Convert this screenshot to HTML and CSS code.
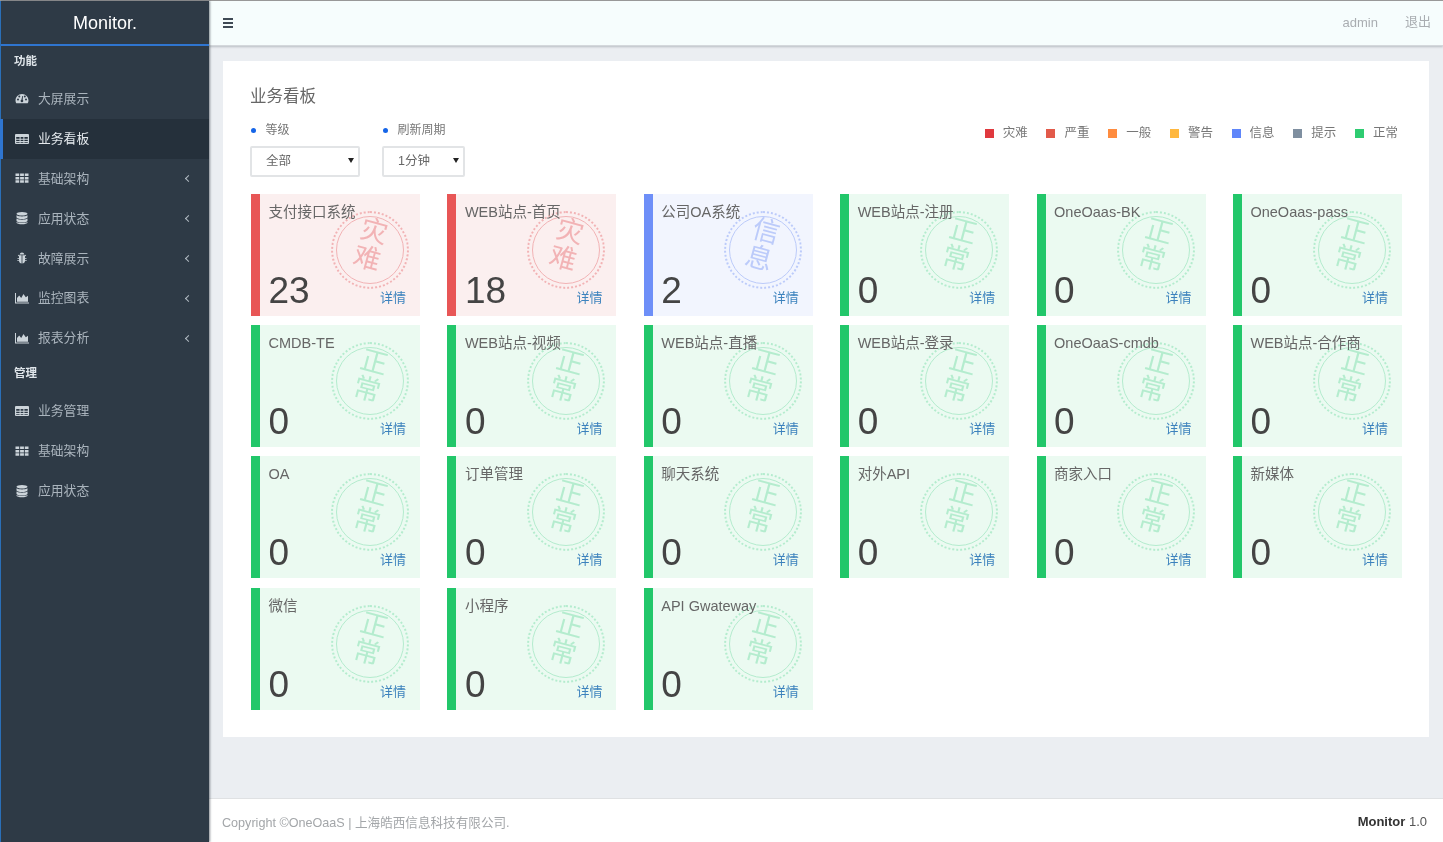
FILE: index.html
```html
<!DOCTYPE html>
<html lang="zh-CN">
<head>
<meta charset="utf-8">
<title>Monitor</title>
<link rel="stylesheet" href="styles.css">
</head>
<body>
<svg class="defs" width="0" height="0" aria-hidden="true">
  <symbol id="i-gauge" viewBox="0 0 14 14"><path fill="currentColor" fill-rule="evenodd" d="M7 2C3.2 2 .5 5 .5 8.500c0 1.100.3 2 .8 2.800h11.400c.5-.8.800-1.700.8-2.800C13.500 5 10.800 2 7 2zM3 8.500a1 1 0 1 1 0-2 1 1 0 0 1 0 2zm1.300-3a1 1 0 1 1 0-2 1 1 0 0 1 0 2zM7 10.200a1.300 1.300 0 0 1-.6-2.500L7.300 4l.7.100-.3 3.700A1.300 1.300 0 0 1 7 10.200zm2.800-4.700a1 1 0 1 1 0-2 1 1 0 0 1 0 2zM11 8.500a1 1 0 1 1 0-2 1 1 0 0 1 0 2z"/></symbol>
  <symbol id="i-table" viewBox="0 0 14 14"><path fill="currentColor" fill-rule="evenodd" d="M1 2h12a1 1 0 0 1 1 1v8a1 1 0 0 1-1 1H1a1 1 0 0 1-1-1V3a1 1 0 0 1 1-1zm.2 3v1.800h3.400V5zm4.400 0v1.800h2.800V5zm3.800 0v1.800h3.400V5zM1.200 7.800v1.200h3.400V7.800zm4.400 0v1.200h2.800V7.800zm3.800 0v1.200h3.400V7.800zM1.200 10v.8h3.400V10zm4.400 0v.8h2.800V10zm3.800 0v.8h3.400V10z"/></symbol>
  <symbol id="i-grid" viewBox="0 0 14 14"><path fill="currentColor" d="M.5 2.500h3.700v2.600H.5zM5.100 2.500h3.800v2.600H5.100zM9.800 2.500h3.700v2.600H9.800zM.5 5.900h3.700v2.500H.5zM5.100 5.900h3.800v2.500H5.100zM9.800 5.900h3.700v2.500H9.800zM.5 9.200h3.700v2.500H.5zM5.100 9.200h3.800v2.500H5.100zM9.800 9.200h3.700v2.500H9.800z"/></symbol>
  <symbol id="i-db" viewBox="0 0 14 14"><path fill="currentColor" d="M7 1c2.800 0 5.500.8 5.500 1.800S9.800 4.600 7 4.600 1.500 3.800 1.500 2.800 4.200 1 7 1zM1.500 4.200c1 .8 3.500 1.200 5.500 1.200s4.500-.4 5.500-1.200v2c0 1-2.700 1.800-5.500 1.800S1.500 7.200 1.500 6.200zM1.500 7.600c1 .8 3.500 1.200 5.500 1.200s4.500-.4 5.500-1.200v2.100c0 1-2.700 1.800-5.500 1.800s-5.500-.8-5.500-1.800zM1.500 11c1 .8 3.500 1.100 5.500 1.100s4.500-.3 5.500-1.100v.7c0 .8-2.700 1.500-5.500 1.500s-5.500-.7-5.500-1.500z"/></symbol>
  <symbol id="i-bug" viewBox="0 0 14 14"><path fill="currentColor" d="M7 1.500a2.500 2.500 0 0 1 2.400 2H4.600a2.500 2.500 0 0 1 2.400-2zM4.200 4.300h2.400v8.200c-1.500-.2-2.400-1.200-2.600-2.500H2.300V9.200H4V7.700H2.500V6.900H4V5.500L2.800 4.200l.5-.5zM7.400 4.300h2.400l.9-.6.500.5L10 5.500v1.400h1.500v.8H10v1.500h1.700v.8H10c-.2 1.300-1.100 2.300-2.600 2.500z"/></symbol>
  <symbol id="i-chart" viewBox="0 0 14 14"><path fill="currentColor" d="M0 2h1v9.500h13v1H0zM2 10.800V7l2.200-2.500L6.200 7l2.300-4 2.300 3.300L13 4.800v6z"/></symbol>
</svg>
<div class="app">
  <aside class="sidebar">
    <div class="brand">Monitor.</div>
    <div class="nav-title">功能</div>
    <a class="nav-item"><svg class="nav-icon"><use href="#i-gauge"/></svg><span>大屏展示</span></a>
    <a class="nav-item active"><svg class="nav-icon"><use href="#i-table"/></svg><span>业务看板</span></a>
    <a class="nav-item"><svg class="nav-icon"><use href="#i-grid"/></svg><span>基础架构</span><i class="chev"></i></a>
    <a class="nav-item"><svg class="nav-icon"><use href="#i-db"/></svg><span>应用状态</span><i class="chev"></i></a>
    <a class="nav-item"><svg class="nav-icon"><use href="#i-bug"/></svg><span>故障展示</span><i class="chev"></i></a>
    <a class="nav-item"><svg class="nav-icon"><use href="#i-chart"/></svg><span>监控图表</span><i class="chev"></i></a>
    <a class="nav-item"><svg class="nav-icon"><use href="#i-chart"/></svg><span>报表分析</span><i class="chev"></i></a>
    <div class="nav-title">管理</div>
    <a class="nav-item"><svg class="nav-icon"><use href="#i-table"/></svg><span>业务管理</span></a>
    <a class="nav-item"><svg class="nav-icon"><use href="#i-grid"/></svg><span>基础架构</span></a>
    <a class="nav-item"><svg class="nav-icon"><use href="#i-db"/></svg><span>应用状态</span></a>
  </aside>
  <div class="main">
    <header class="topbar">
      <div class="burger"><b></b><b></b><b></b></div>
      <div class="top-links"><span class="admin">admin</span><span class="logout">退出</span></div>
    </header>
    <div class="content">
      <section class="panel">
        <h2 class="panel-title">业务看板</h2>
        <div class="filters">
          <div class="filter">
            <div class="filter-label">等级</div>
            <div class="select select-level"><span>全部</span></div>
          </div>
          <div class="filter">
            <div class="filter-label">刷新周期</div>
            <div class="select select-cycle"><span>1分钟</span></div>
          </div>
          <ul class="legend">
            <li><i class="sw c1"></i>灾难</li>
            <li><i class="sw c2"></i>严重</li>
            <li><i class="sw c3"></i>一般</li>
            <li><i class="sw c4"></i>警告</li>
            <li><i class="sw c5"></i>信息</li>
            <li><i class="sw c6"></i>提示</li>
            <li><i class="sw c7"></i>正常</li>
          </ul>
        </div>
        <div class="cards">
          <article class="card bad"><div class="stamp"><span>灾<br>难</span></div><h3>支付接口系统</h3><div class="foot"><strong>23</strong><a>详情</a></div></article>
          <article class="card bad"><div class="stamp"><span>灾<br>难</span></div><h3>WEB站点-首页</h3><div class="foot"><strong>18</strong><a>详情</a></div></article>
          <article class="card info"><div class="stamp"><span>信<br>息</span></div><h3>公司OA系统</h3><div class="foot"><strong>2</strong><a>详情</a></div></article>
          <article class="card ok"><div class="stamp"><span>正<br>常</span></div><h3>WEB站点-注册</h3><div class="foot"><strong>0</strong><a>详情</a></div></article>
          <article class="card ok"><div class="stamp"><span>正<br>常</span></div><h3>OneOaas-BK</h3><div class="foot"><strong>0</strong><a>详情</a></div></article>
          <article class="card ok"><div class="stamp"><span>正<br>常</span></div><h3>OneOaas-pass</h3><div class="foot"><strong>0</strong><a>详情</a></div></article>
          <article class="card ok"><div class="stamp"><span>正<br>常</span></div><h3>CMDB-TE</h3><div class="foot"><strong>0</strong><a>详情</a></div></article>
          <article class="card ok"><div class="stamp"><span>正<br>常</span></div><h3>WEB站点-视频</h3><div class="foot"><strong>0</strong><a>详情</a></div></article>
          <article class="card ok"><div class="stamp"><span>正<br>常</span></div><h3>WEB站点-直播</h3><div class="foot"><strong>0</strong><a>详情</a></div></article>
          <article class="card ok"><div class="stamp"><span>正<br>常</span></div><h3>WEB站点-登录</h3><div class="foot"><strong>0</strong><a>详情</a></div></article>
          <article class="card ok"><div class="stamp"><span>正<br>常</span></div><h3>OneOaaS-cmdb</h3><div class="foot"><strong>0</strong><a>详情</a></div></article>
          <article class="card ok"><div class="stamp"><span>正<br>常</span></div><h3>WEB站点-合作商</h3><div class="foot"><strong>0</strong><a>详情</a></div></article>
          <article class="card ok"><div class="stamp"><span>正<br>常</span></div><h3>OA</h3><div class="foot"><strong>0</strong><a>详情</a></div></article>
          <article class="card ok"><div class="stamp"><span>正<br>常</span></div><h3>订单管理</h3><div class="foot"><strong>0</strong><a>详情</a></div></article>
          <article class="card ok"><div class="stamp"><span>正<br>常</span></div><h3>聊天系统</h3><div class="foot"><strong>0</strong><a>详情</a></div></article>
          <article class="card ok"><div class="stamp"><span>正<br>常</span></div><h3>对外API</h3><div class="foot"><strong>0</strong><a>详情</a></div></article>
          <article class="card ok"><div class="stamp"><span>正<br>常</span></div><h3>商家入口</h3><div class="foot"><strong>0</strong><a>详情</a></div></article>
          <article class="card ok"><div class="stamp"><span>正<br>常</span></div><h3>新媒体</h3><div class="foot"><strong>0</strong><a>详情</a></div></article>
          <article class="card ok"><div class="stamp"><span>正<br>常</span></div><h3>微信</h3><div class="foot"><strong>0</strong><a>详情</a></div></article>
          <article class="card ok"><div class="stamp"><span>正<br>常</span></div><h3>小程序</h3><div class="foot"><strong>0</strong><a>详情</a></div></article>
          <article class="card ok"><div class="stamp"><span>正<br>常</span></div><h3>API Gwateway</h3><div class="foot"><strong>0</strong><a>详情</a></div></article>
        </div>
      </section>
    </div>
    <footer class="footer">
      <div>Copyright ©OneOaaS | 上海皓西信息科技有限公司.</div>
      <div class="version"><b>Monitor</b> 1.0</div>
    </footer>
  </div>
</div>
</body>
</html>
```
FILE: styles.css
```css
* { box-sizing: border-box; }
html, body { margin: 0; height: 100%; }
body {
  font-family: "Liberation Sans", "Noto Sans CJK SC", sans-serif;
  color: #666;
  background: #ebeef2;
  overflow: hidden;
}
.defs { position: absolute; }
.app {
  display: flex;
  height: 842px;
  border-top: 1px solid #9a9a9a;
  filter: blur(0.4px);
}

/* Sidebar */
.sidebar {
  flex: 0 0 209px;
  background: #2e3a46;
  border-left: 1px solid #2a6fb8;
  box-shadow: 1px 0 2px rgba(40, 50, 60, .55);
  z-index: 2;
}
.brand {
  height: 45px;
  border-bottom: 2px solid #2f75d0;
  color: #fff;
  font-size: 18px;
  line-height: 44px;
  text-align: center;
}
.nav-title {
  height: 33.5px;
  line-height: 31px;
  padding-left: 13px;
  color: #dfe5ea;
  font-size: 11.5px;
  font-weight: 700;
}
.nav-item {
  display: flex;
  align-items: center;
  height: 39.8px;
  padding-left: 14px;
  color: #aab4bd;
  font-size: 12.8px;
}
.nav-item span { margin-top: -3px; }
.nav-item.active {
  margin-left: -1px;
  background: #25303b;
  border-left: 3px solid #2f75d0;
  padding-left: 12px;
  color: #e4e9ed;
}
.nav-icon {
  flex: 0 0 14px;
  width: 14px;
  height: 14px;
  margin-right: 9px;
  margin-top: -1px;
  color: #ccd4da;
}
.chev {
  width: 5px;
  height: 5px;
  margin-left: auto;
  margin-right: 18px;
  border-left: 1.5px solid #b4bdc5;
  border-bottom: 1.5px solid #b4bdc5;
  transform: rotate(45deg);
}

/* Main column */
.main {
  flex: 1;
  min-width: 0;
  display: flex;
  flex-direction: column;
}
.topbar {
  flex: 0 0 45px;
  display: flex;
  align-items: center;
  justify-content: space-between;
  padding: 0 12px 0 14px;
  background: #f6fdfd;
  border-bottom: 1px solid #d4d8dc;
  box-shadow: 0 1px 2px rgba(90, 100, 110, .35);
  color: #a9adb1;
  font-size: 13px;
}
.burger { display: flex; flex-direction: column; gap: 1.5px; width: 10px; }
.burger b { display: block; height: 2.2px; background: #3f4a55; }
.top-links { display: flex; align-items: center; gap: 27px; }
.admin { height: 18px; line-height: 18px; }
.logout { height: 18px; line-height: 18px; margin-top: -2px; }

.content {
  flex: 1;
  padding: 15px 14px 0;
}
.panel {
  height: 676px;
  padding: 23px 27px 0;
  background: #fff;
}
.panel-title {
  margin: 0;
  color: #666;
  font-size: 16.5px;
  font-weight: 400;
  line-height: 24px;
}
.filters {
  display: flex;
  gap: 22px;
  margin-top: 14px;
  padding-right: 4px;
}
.filter-label {
  position: relative;
  padding-left: 15.5px;
  height: 17px;
  line-height: 17px;
  font-size: 12px;
  color: #777;
}
.filter-label::before {
  content: "";
  position: absolute;
  left: 1px;
  top: 6px;
  width: 5px;
  height: 5px;
  border-radius: 50%;
  background: #1565e8;
}
.select {
  position: relative;
  height: 31px;
  margin-top: 7px;
  padding-left: 14px;
  border: 2px solid #e2e4e6;
  border-radius: 2px;
  background: #fff;
  color: #666;
  font-size: 12.5px;
  line-height: 27px;
}
.select::after {
  content: "";
  position: absolute;
  right: 4px;
  top: 10px;
  border-left: 3px solid transparent;
  border-right: 3px solid transparent;
  border-top: 5px solid #222;
}
.select-level { width: 110px; }
.select-cycle { width: 83px; }

.legend {
  display: flex;
  gap: 18.7px;
  margin: 2px 0 0 auto;
  padding: 0;
  list-style: none;
  font-size: 12.5px;
  line-height: 18px;
  color: #777;
  align-self: flex-start;
}
.legend li { display: flex; align-items: center; gap: 9px; }
.sw { display: block; width: 9px; height: 9px; }
.c1 { background: #e0393e; }
.c2 { background: #e25a4a; }
.c3 { background: #ff8c3f; }
.c4 { background: #ffb83f; }
.c5 { background: #5f86fa; }
.c6 { background: #7f8fa0; }
.c7 { background: #2ecc71; }

/* Cards */
.cards {
  display: grid;
  grid-template-columns: repeat(6, 169px);
  grid-auto-rows: 122px;
  column-gap: 27.4px;
  row-gap: 9.2px;
  margin: 17px 0 0 1px;
}
.card {
  position: relative;
  display: flex;
  flex-direction: column;
  padding: 8px 14px 0 8.5px;
  border-left: 9px solid;
  overflow: hidden;
}
.card.bad { background: #fbefef; border-color: #e85656; --stamp: #f2b3b5; }
.card.info { background: #f2f5fe; border-color: #6e8ff8; --stamp: #bccbfa; }
.card.ok { background: #ebfaf1; border-color: #22c76a; --stamp: #b4ecce; }
.card h3 {
  position: relative;
  margin: 0;
  color: #666;
  font-size: 14.5px;
  font-weight: 400;
  line-height: 20px;
  white-space: nowrap;
}
.foot {
  position: relative;
  margin-top: auto;
  display: flex;
  align-items: flex-end;
  justify-content: space-between;
  height: 46px;
  padding-bottom: 9px;
}
.foot strong {
  color: #444;
  font-size: 37px;
  font-weight: 400;
  line-height: 40px;
  margin-bottom: -4px;
}
.foot a {
  color: #3c82bd;
  font-size: 13px;
  line-height: 18px;
}
.stamp {
  position: absolute;
  left: 71px;
  top: 17px;
  width: 78px;
  height: 78px;
  display: flex;
  align-items: center;
  justify-content: center;
  border: 2px dotted var(--stamp);
  border-radius: 50%;
  color: var(--stamp);
}
.stamp::before {
  content: "";
  position: absolute;
  inset: 3px;
  border: 1.5px solid var(--stamp);
  border-radius: 50%;
}
.stamp span {
  display: block;
  transform: translateY(-5px) rotate(15deg);
  font-size: 27px;
  line-height: 28px;
  text-align: center;
}

.footer {
  flex: 0 0 44px;
  display: flex;
  align-items: center;
  justify-content: space-between;
  padding: 2px 16px 0 13px;
  background: #fff;
  border-top: 1px solid #dfe1e3;
  color: #a3a6a9;
  font-size: 12.6px;
}
.version { color: #555; font-size: 13px; }
.version b { color: #333; }
```
